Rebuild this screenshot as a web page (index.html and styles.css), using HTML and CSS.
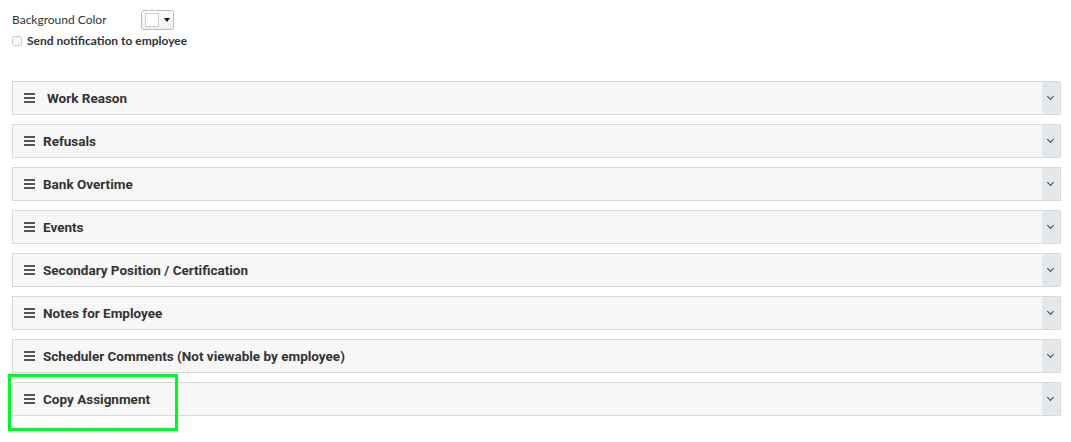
FILE: index.html
```html
<!DOCTYPE html>
<html lang="en">
  <head>
    <meta charset="UTF-8">
    <title>Assignment</title>
    <link rel="stylesheet" href="styles.css">
  </head>
  <body>
    <main class="page">
        <div class="field">
            <span class="field-label">Background Color</span>
            <button class="color-picker" type="button">
                <span class="swatch"></span>
                <span class="caret"></span>
            </button>
        </div>
        <label class="notify">
            <input type="checkbox" class="notify-box">
            <span>Send notification to employee</span>
        </label>

        <div class="sections">
            <div class="section">
                <span class="handle"></span>
                <span class="title title-wide">Work Reason</span>
                <span class="toggle"></span>
            </div>
            <div class="section">
                <span class="handle"></span>
                <span class="title">Refusals</span>
                <span class="toggle"></span>
            </div>
            <div class="section">
                <span class="handle"></span>
                <span class="title">Bank Overtime</span>
                <span class="toggle"></span>
            </div>
            <div class="section">
                <span class="handle"></span>
                <span class="title">Events</span>
                <span class="toggle"></span>
            </div>
            <div class="section">
                <span class="handle"></span>
                <span class="title">Secondary Position / Certification</span>
                <span class="toggle"></span>
            </div>
            <div class="section">
                <span class="handle"></span>
                <span class="title">Notes for Employee</span>
                <span class="toggle"></span>
            </div>
            <div class="section">
                <span class="handle"></span>
                <span class="title">Scheduler Comments (Not viewable by employee)</span>
                <span class="toggle"></span>
            </div>
            <div class="section highlighted">
                <span class="handle"></span>
                <span class="title">Copy Assignment</span>
                <span class="toggle"></span>
            </div>
        </div>
    </main>
  </body>
</html>
```

FILE: styles.css
```css
html, body {
    height: 100%;
}
body {
    margin: 0;
    font-family: Lato, "Open Sans", sans-serif;
    color: #333;
    background: #fff;
}
.page {
    padding: 9px 10px 30px 12px;
}
.field {
    display: flex;
    align-items: center;
    height: 21px;
}
.field-label {
    font-size: 12px;
    width: 129px;
}
.color-picker {
    display: flex;
    align-items: center;
    gap: 5px;
    width: 33px;
    height: 20px;
    padding: 0 0 0 3px;
    border: 1px solid #bbb;
    border-radius: 3px;
    background: linear-gradient(#fff, #f0f0f0);
}
.swatch {
    width: 12px;
    height: 12px;
    border: 1px solid #ccc;
    background: #fff;
}
.caret {
    width: 0;
    height: 0;
    border-left: 3.5px solid transparent;
    border-right: 3.5px solid transparent;
    border-top: 4px solid #111;
}
.notify {
    display: flex;
    align-items: center;
    gap: 5px;
    margin-top: 3px;
    font-size: 12px;
    font-weight: bold;
}
.notify-box {
    margin: 0;
    width: 10px;
    height: 10px;
    appearance: none;
    border: 1px solid #ccc;
    border-radius: 2px;
    background: #fafafa;
}
.sections {
    margin-top: 33px;
}
.section {
    position: relative;
    display: flex;
    align-items: center;
    height: 32px;
    margin-bottom: 9px;
    border: 1px solid #d9d9d9;
    background: #f7f7f7;
    font-family: Roboto, Arial, sans-serif;
}
.handle {
    width: 11px;
    height: 2px;
    margin-left: 11px;
    background: #555;
    box-shadow: 0 -4px 0 #555, 0 4px 0 #555;
}
.title {
    margin-left: 8px;
    font-size: 13.5px;
    font-weight: bold;
    color: #333;
}
.title-wide {
    margin-left: 12px;
}
.toggle {
    margin-left: auto;
    align-self: stretch;
    width: 18px;
    background: #e4e8eb;
    border-radius: 3px;
    position: relative;
}
.toggle::after {
    content: "";
    position: absolute;
    left: 6px;
    top: 12px;
    width: 4px;
    height: 4px;
    border-right: 1px solid #444;
    border-bottom: 1px solid #444;
    transform: rotate(45deg);
}
.highlighted::before {
    content: "";
    position: absolute;
    left: -5px;
    top: -9px;
    width: 164px;
    height: 51px;
    border: 3px solid #00f52a;
}
```
